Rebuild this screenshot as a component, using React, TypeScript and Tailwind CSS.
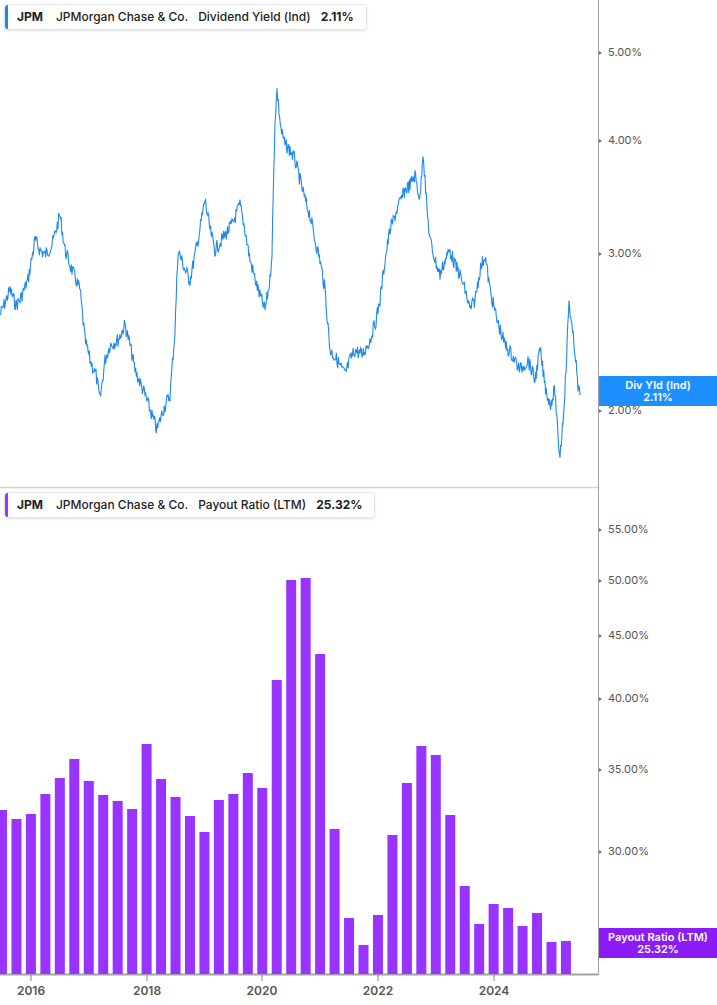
import React from "react";

const kp: [number, number][] = [[0,315],[6,300],[10,290],[16,305],[20,300],[28,280],[35,240],[40,250],[45,255],[52,245],[60,215],[65,250],[70,265],[80,290],[85,340],[90,360],[96,375],[100,400],[105,360],[110,345],[118,340],[125,325],[130,345],[135,370],[145,395],[150,410],[157,430],[163,410],[170,395],[175,330],[178,250],[185,270],[190,280],[198,240],[205,200],[210,230],[215,250],[225,235],[232,225],[240,205],[245,230],[250,260],[258,290],[265,310],[270,280],[272,250],[275,120],[277,90],[281,130],[285,145],[290,150],[295,160],[300,180],[305,200],[310,215],[315,240],[320,260],[325,290],[330,350],[337,360],[345,375],[350,360],[355,350],[362,355],[370,340],[376,320],[380,300],[385,260],[390,230],[397,210],[405,190],[410,185],[415,175],[420,200],[423,150],[427,210],[430,240],[435,260],[440,275],[445,260],[450,250],[455,265],[460,275],[465,290],[470,310],[475,300],[480,270],[485,255],[490,290],[497,320],[505,345],[512,355],[520,370],[528,360],[535,380],[540,350],[545,385],[550,405],[555,390],[558,440],[560,455],[563,420],[566,370],[569,300],[572,330],[575,350],[578,390],[580,395]];

function buildPath() {
  let seed = 7;
  const rnd = () => { seed = (seed * 9301 + 49297) % 233280; return seed / 233280; };
  const pts: string[] = [];
  for (let i = 0; i < kp.length - 1; i++) {
    const [x0, y0] = kp[i], [x1, y1] = kp[i + 1];
    const steps = Math.max(1, Math.round((x1 - x0) * 1.5));
    for (let s = 0; s < steps; s++) {
      const t = s / steps;
      const x = x0 + (x1 - x0) * t;
      const y = y0 + (y1 - y0) * t + (rnd() - 0.5) * 14;
      pts.push(`${x.toFixed(2)},${y.toFixed(1)}`);
    }
  }
  pts.push(`${kp[kp.length - 1][0]},${kp[kp.length - 1][1]}`);
  return "M" + pts.join(" L");
}

const bars = [810,819,814,794,778,759,781,795,801,809,744,779,797,816,832,800,794,773,788,680,580,578,654,829,918,945,915,835,783,746,755,815,886,924,904,908,926,913,942,941];

const font = { fontFamily: "Inter, 'Liberation Sans', sans-serif" };

function Legend({ color, label, value }: { color: string; label: string; value: string }) {
  return (
    <div className="absolute left-[4px] top-[4px] flex items-center h-[26px] rounded border border-[#e5e7eb] bg-white text-[12px] text-[#222] pr-[12px] shadow-sm" style={font}>
      <div className="w-[3px] h-full rounded-l" style={{ background: color }} />
      <span className="ml-[9px] font-bold">JPM</span>
      <span className="ml-[13px] font-medium">JPMorgan Chase &amp; Co.</span>
      <span className="ml-[10px] font-medium">{label}</span>
      <span className="ml-[10px] font-bold">{value}</span>
    </div>
  );
}

export default function App() {
  const path = buildPath();
  const topTicks = [["5.00%", 53], ["4.00%", 141], ["3.00%", 254], ["2.00%", 411]] as const;
  const botTicks = [["55.00%", 530], ["50.00%", 581], ["45.00%", 636], ["40.00%", 699], ["35.00%", 770], ["30.00%", 852]] as const;
  const years = [["2016", 31], ["2018", 147], ["2020", 262], ["2022", 378], ["2024", 494]] as const;
  return (
    <div className="relative w-[717px] h-[1005px] bg-white overflow-hidden" style={font}>
      <svg className="absolute left-0 top-0" width="717" height="1005">
        <line x1="0" y1="487.5" x2="598" y2="487.5" stroke="#d4d4d4" strokeWidth="1.5" />
        <line x1="598.5" y1="0" x2="598.5" y2="975" stroke="#a3a3a3" strokeWidth="1" />
        <line x1="0" y1="974.5" x2="598" y2="974.5" stroke="#a3a3a3" strokeWidth="2" />
        <path d={path} fill="none" stroke="#1e88f0" strokeWidth="1.1" />
        {bars.map((t, i) => {
          const cx = 2 + 14.46 * i;
          return <rect key={i} x={cx - 5} y={t} width={10} height={974 - t} fill="#9933ff" />;
        })}
        {[...topTicks, ...botTicks].map(([, y]) => (
          <polygon key={y} points={`599,${y - 2} 602,${y} 599,${y + 2}`} fill="#777" />
        ))}
        {years.map(([, x]) => (
          <line key={x} x1={x} y1="975" x2={x} y2="981" stroke="#888" />
        ))}
      </svg>
      {[...topTicks, ...botTicks].map(([l, y]) => (
        <div key={l} className="absolute left-[608px] text-[11px] text-[#555] leading-none" style={{ top: y - 6 }}>{l}</div>
      ))}
      {years.map(([l, x]) => (
        <div key={l} className="absolute top-[985px] text-[12px] font-semibold text-[#555] w-[40px] text-center leading-none" style={{ left: x - 20 }}>{l}</div>
      ))}
      <div className="absolute left-[599px] top-[376px] w-[118px] h-[30px] bg-[#1e8fff] text-white text-[11px] font-semibold leading-[12px] flex flex-col items-center justify-center">
        <span>Div Yld (Ind)</span><span>2.11%</span>
      </div>
      <div className="absolute left-[599px] top-[928px] w-[118px] h-[30px] bg-[#8c1cf5] text-white text-[11px] font-semibold leading-[12px] flex flex-col items-center justify-center">
        <span>Payout Ratio (LTM)</span><span>25.32%</span>
      </div>
      <Legend color="#1e88f0" label="Dividend Yield (Ind)" value="2.11%" />
      <div className="absolute left-0 top-[488px] w-full h-[40px]">
        <Legend color="#9933ff" label="Payout Ratio (LTM)" value="25.32%" />
      </div>
    </div>
  );
}
